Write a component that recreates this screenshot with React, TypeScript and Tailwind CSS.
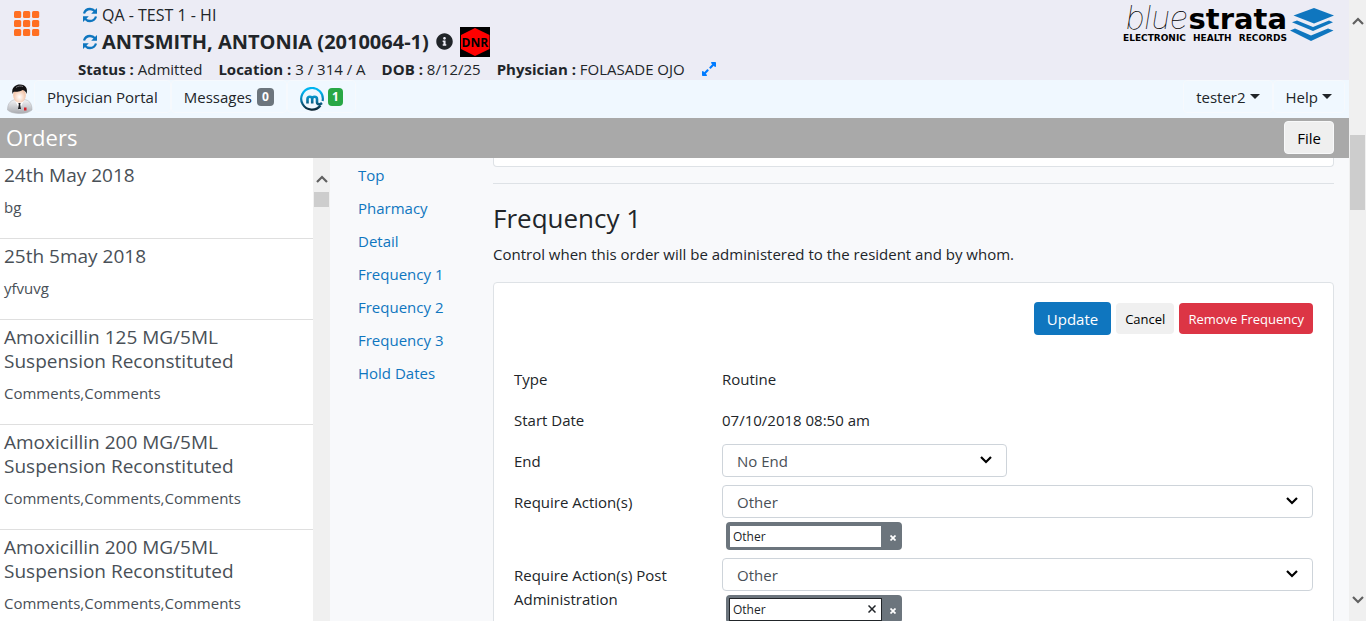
import React from "react";
import { FaInfoCircle, FaExpandAlt } from "react-icons/fa";

const orders = [
  { title: "24th May 2018", comments: "bg" },
  { title: "25th 5may 2018", comments: "yfvuvg" },
  { title: "Amoxicillin 125 MG/5ML Suspension Reconstituted", comments: "Comments,Comments" },
  { title: "Amoxicillin 200 MG/5ML Suspension Reconstituted", comments: "Comments,Comments,Comments" },
  { title: "Amoxicillin 200 MG/5ML Suspension Reconstituted", comments: "Comments,Comments,Comments" },
];

const sections = ["Top", "Pharmacy", "Detail", "Frequency 1", "Frequency 2", "Frequency 3", "Hold Dates"];

function Chevron({ up = false, className = "" }: { up?: boolean; className?: string }) {
  return (
    <svg viewBox="0 0 12 8" className={className} width="12" height="8" fill="none" stroke="currentColor" strokeWidth="2.2" aria-hidden="true">
      <path d={up ? "M1 7 L6 2 L11 7" : "M1 1 L6 6 L11 1"} />
    </svg>
  );
}

function AppsIcon() {
  return (
    <svg width="26" height="26" viewBox="0 0 26 26" fill="#ff6f22" aria-hidden="true">
      {[0, 9, 18].map((y) => [0, 9, 18].map((x) => <rect key={`${x}-${y}`} x={x} y={y} width="7.2" height="7" rx="1.5" />))}
    </svg>
  );
}

function RefreshIcon() {
  return (
    <svg width="16" height="16" viewBox="0 0 16 16" aria-hidden="true">
      <path d="M2 6.500C3 3.500 5.300 2 8 2C10 2 11.700 2.800 13 4.300M14 9.500C13 12.500 10.700 14 8 14C6 14 4.300 13.200 3 11.700" fill="none" stroke="#0f76bf" strokeWidth="2.300" />
      <path d="M15 1V6.800H9.200ZM1 15V9.200H6.800Z" fill="#0f76bf" />
    </svg>
  );
}

function DoctorIcon() {
  return (
    <svg width="26" height="30" viewBox="0 0 26 30" aria-hidden="true">
      <defs>
        <linearGradient id="coat" x1="0" y1="0" x2="0" y2="1">
          <stop offset="0" stopColor="#f4f4f6" />
          <stop offset="1" stopColor="#a9abb0" />
        </linearGradient>
        <radialGradient id="face" cx="0.5" cy="0.6" r="0.6">
          <stop offset="0" stopColor="#ffffff" />
          <stop offset="1" stopColor="#f0b896" />
        </radialGradient>
      </defs>
      <path d="M0.500 26C0.500 19 4 16 9 15.500H17C22 16 25 19 25 26C22 28.500 18 29.500 13 29.500S3 28.500 0.500 26Z" fill="url(#coat)" stroke="#b4b6ba" strokeWidth="0.600" />
      <path d="M8 16L12.500 26L17 16Z" fill="#fff" />
      <path d="M11.300 19H13.700L13.200 20.500L14 25H11L11.800 20.500Z" fill="#202024" />
      <ellipse cx="12.500" cy="11.500" rx="6.300" ry="7.300" fill="url(#face)" />
      <path d="M5.500 10C4 3 9 0.500 13 0.500C19 0.500 21 5 19.500 10C19 8 18 6.500 15.500 6C12 8.500 8 7.500 6.500 8Z" fill="#121214" />
      <path d="M9 3.500C11 1.800 14 1.800 16 2.500" stroke="#77777c" strokeWidth="1" fill="none" />
      <rect x="17" y="23.500" width="2.500" height="3" fill="#d3202a" />
    </svg>
  );
}

function MIcon() {
  return (
    <svg width="24" height="24" viewBox="0 0 24 24" fill="none" stroke="url(#mgrad)" aria-hidden="true">
      <defs>
        <linearGradient id="mgrad" gradientUnits="userSpaceOnUse" x1="0" y1="0" x2="0" y2="24">
          <stop offset="0.200" stopColor="#00b4f0" />
          <stop offset="0.550" stopColor="#0a78a8" />
          <stop offset="1" stopColor="#0c1c28" />
        </linearGradient>
      </defs>
      <path d="M20.500 18.500A10.800 10.800 0 1 1 22.600 14" strokeWidth="2.200" />
      <path d="M7.500 16.500V12C7.500 9 12.200 9 12.200 12V16.500M12.200 12C12.200 9 17 9 17 12V15C17 17.500 19.500 18 22 16" strokeWidth="2.600" />
    </svg>
  );
}

function DnrIcon() {
  return (
    <span className="grid size-[30px] place-items-center overflow-hidden bg-black">
      <svg className="col-start-1 row-start-1" width="30" height="30" viewBox="0 0 30 30" aria-hidden="true">
        <path d="M15 1L29.500 8V22L15 29L1 22V8Z" fill="#f00" />
      </svg>
      <b className="col-start-1 row-start-1 pt-0.5 text-[12px] leading-4 text-black">DNR</b>
    </span>
  );
}

function Logo() {
  return (
    <div className="flex gap-[3px] pt-1 pr-[15px] text-black">
      <div className="w-[164px] font-['DejaVu_Sans',sans-serif]">
        <div className="flex h-7 items-baseline justify-end gap-px">
          <span className="font-[Inter] text-[32px] leading-7 font-thin italic">blue</span>
          <span className="text-[29px] leading-7 font-bold">strata</span>
        </div>
        <div className="flex justify-between text-[9px] leading-3 font-bold">
          <span>ELECTRONIC</span> <span>HEALTH</span> <span>RECORDS</span>
        </div>
      </div>
      <svg className="mt-1" width="44" height="34" viewBox="0 0 44 34" fill="#0f76bf" aria-hidden="true">
        <path d="M24 0L44 7.500L24 15.500L3.500 7.500Z" />
        <path d="M2 14.200L7 12.600L23 19L39 12.600L43 14.200L23 23Z" />
        <path d="M0 22.500L5 20.600L21 27.500L38 20.600L43.500 22.500L21 33Z" />
      </svg>
    </div>
  );
}

function Caret() {
  return <span className="border-x-[5px] border-t-[5px] border-x-transparent border-t-[#212529]" />;
}

const navBox = "flex h-[33px] items-center rounded-sm border border-[#f6f9fd] px-3";

function SelectBox({ id, value, wide }: { id: string; value: string; wide?: boolean }) {
  return (
    <div className={wide ? "relative w-full" : "relative w-[285px]"}>
      <select id={id} defaultValue={value} className="block h-[33px] w-full appearance-none rounded border border-[#ced4da] bg-white pl-3.5 text-[15px] text-[#495057]">
        <option>{value}</option>
      </select>
      <Chevron className="pointer-events-none absolute top-3 right-[15px] text-black" />
    </div>
  );
}

function ActionTag({ label, focused }: { label: string; focused?: boolean }) {
  return (
    <div className="mt-1 ml-1 flex h-7 w-44 items-center rounded bg-[#6c757d] pl-[3px]">
      <div className={focused ? "flex h-[23px] w-[153px] items-center border border-[#212529] bg-white" : "flex h-[23px] w-[153px] items-center border border-[#6c757d] bg-white"}>
        <input aria-label={label} defaultValue="Other" className="min-w-0 flex-1 bg-transparent pt-0.5 pl-[3px] text-xs text-[#212529] outline-none" />
        {focused && (
          <button aria-label="Clear" className="px-[5px]">
            <svg width="8" height="8" viewBox="0 0 8 8" stroke="#212529" strokeWidth="1.500" aria-hidden="true"><path d="M0.500 0.500L7.500 7.500M7.500 0.500L0.500 7.500" /></svg>
          </button>
        )}
      </div>
      <button aria-label="Remove" className="flex flex-1 justify-center pt-1 pl-0.5">
        <svg width="6" height="6" viewBox="0 0 6 6" stroke="#fff" strokeWidth="1.700" aria-hidden="true"><path d="M0.500 0.500L5.500 5.500M5.500 0.500L0.500 5.500" /></svg>
      </button>
    </div>
  );
}

function Row({ label, htmlFor, children }: { label: string; htmlFor?: string; children: React.ReactNode }) {
  return (
    <div className="grid grid-cols-[1fr_3fr] gap-x-[11px]">
      {htmlFor ? <label htmlFor={htmlFor} className="pt-[5px]">{label}</label> : <span className="pt-[5px]">{label}</span>}
      <div className="min-h-[33px]">{children}</div>
    </div>
  );
}

export default function App() {
  return (
    <div className="flex h-screen overflow-hidden bg-[#f8f9fb] font-['Open_Sans','Noto_Sans',sans-serif] text-[15px] leading-6 text-[#212529]">
      <div className="flex min-w-0 flex-1 flex-col">
        <header className="flex h-20 shrink-0 bg-[#ececf5]">
          <button aria-label="Apps" className="w-[78px] self-start pt-[11px] pl-3.5"><AppsIcon /></button>
          <div className="flex-1 pt-[3px]">
            <div className="flex h-[23px] items-center gap-1 pl-1">
              <RefreshIcon />
              <span className="text-base leading-[22px]">QA - TEST 1 - HI</span>
            </div>
            <div className="flex h-[31px] items-center gap-1 pl-1">
              <RefreshIcon />
              <b className="text-[20px]">ANTSMITH, ANTONIA (2010064-1)</b>
              <FaInfoCircle className="mx-[3px] size-[17px]" />
              <DnrIcon />
            </div>
            <div className="flex items-center gap-4">
              <span><b>Status :</b> Admitted</span>
              <span><b>Location :</b> 3 / 314 / A</span>
              <span><b>DOB :</b> 8/12/25</span>
              <span><b>Physician :</b> FOLASADE OJO</span>
              <FaExpandAlt className="size-4 text-[#007bff]" />
            </div>
          </div>
          <Logo />
        </header>

        <nav className="flex h-[38px] shrink-0 items-start bg-[#f0f8ff] pr-1">
          <span className="pt-1 pr-px pl-[7px]"><DoctorIcon /></span>
          <a href="#portal" className={navBox}>Physician Portal</a>
          <a href="#messages" className={navBox}>
            Messages
            <span className="ml-[5px] rounded bg-[#6c757d] px-[5px] text-xs leading-[18px] font-bold text-white">0</span>
          </a>
          <a href="#m" aria-label="m" className={navBox}>
            <span className="pt-1"><MIcon /></span>
            <span className="ml-1 rounded bg-[#28a745] px-1 text-xs leading-[18px] font-bold text-white">1</span>
          </a>
          <div className="ml-auto flex">
            <button className={navBox}><span className="mr-1">tester2</span><Caret /></button>
            <button className={navBox}><span className="mr-1">Help</span><Caret /></button>
          </div>
        </nav>

        <div className="flex h-10 shrink-0 items-start justify-between bg-[#a9a9a9] pt-[3px] pr-[15px] pl-1.5">
          <h1 className="text-[22px] leading-[33px] text-white">Orders</h1>
          <button className="h-[33px] rounded border border-[#f8f9fa] bg-[#efefef] px-3 text-black">File</button>
        </div>

        <div className="flex min-h-0 flex-1">
          <aside className="flex w-[330px] shrink-0 overflow-hidden bg-white">
            <ul className="flex-1">
              {orders.map((o, i) => (
                <li key={i} className="border-b border-[#dfdfdf] px-1 pt-[5px] pb-[19px] text-[#495057]">
                  <h2 className="mb-2 pr-12 text-[19px]">{o.title}</h2>
                  <p>{o.comments}</p>
                </li>
              ))}
            </ul>
            <div className="flex w-[17px] flex-col items-center bg-[#f0f0f0] pt-[17px] text-[#606060]">
              <Chevron up />
              <div className="mt-[9px] h-[15px] w-[15px] bg-[#cdcdcd]" />
            </div>
          </aside>

          <ul className="flex w-[163px] shrink-0 flex-col gap-[9px] pt-[5px] pl-7">
            {sections.map((s) => (
              <li key={s}><a href="#section" className="text-[#0f76bf]">{s}</a></li>
            ))}
          </ul>

          <main className="min-w-0 flex-1 overflow-hidden pr-[15px]">
            <div className="h-[9px] rounded-b border border-t-0 border-[#dee2e6] bg-white" />
            <hr className="mt-4 border-[#dee2e6]" />
            <h2 className="mt-4 text-[26px] leading-9">Frequency 1</h2>
            <p className="mt-1.5">Control when this order will be administered to the resident and by whom.</p>
            <section className="mt-4 flex flex-col gap-2 rounded border border-[#dee2e6] bg-white px-5 pt-[19px] pb-5">
              <div className="mb-[19px] flex items-center justify-end gap-[5px]">
                <button className="h-[33px] rounded bg-[#0f76bf] px-[13px] text-white">Update</button>
                <button className="h-[31px] rounded-sm bg-[#f0f0f0] px-[9px] text-[13px] text-black">Cancel</button>
                <button className="h-[31px] rounded-sm bg-[#dc3545] px-[9px] text-[13px] text-white">Remove Frequency</button>
              </div>
              <Row label="Type"><div className="pt-[5px]">Routine</div></Row>
              <Row label="Start Date"><div className="pt-[5px]">07/10/2018 08:50 am</div></Row>
              <Row label="End" htmlFor="end"><SelectBox id="end" value="No End" /></Row>
              <Row label="Require Action(s)" htmlFor="act">
                <SelectBox id="act" value="Other" wide />
                <ActionTag label="Required action" />
              </Row>
              <Row label="Require Action(s) Post Administration" htmlFor="post">
                <SelectBox id="post" value="Other" wide />
                <ActionTag label="Required post action" focused />
              </Row>
            </section>
          </main>
        </div>
      </div>

      <div className="flex w-[17px] shrink-0 flex-col items-center bg-[#f0f0f0] pt-[17px] pb-[17px] text-[#606060]">
        <Chevron up />
        <div className="mt-[110px] h-[75px] w-[15px] bg-[#cdcdcd]" />
        <Chevron className="mt-auto" />
      </div>
    </div>
  );
}
